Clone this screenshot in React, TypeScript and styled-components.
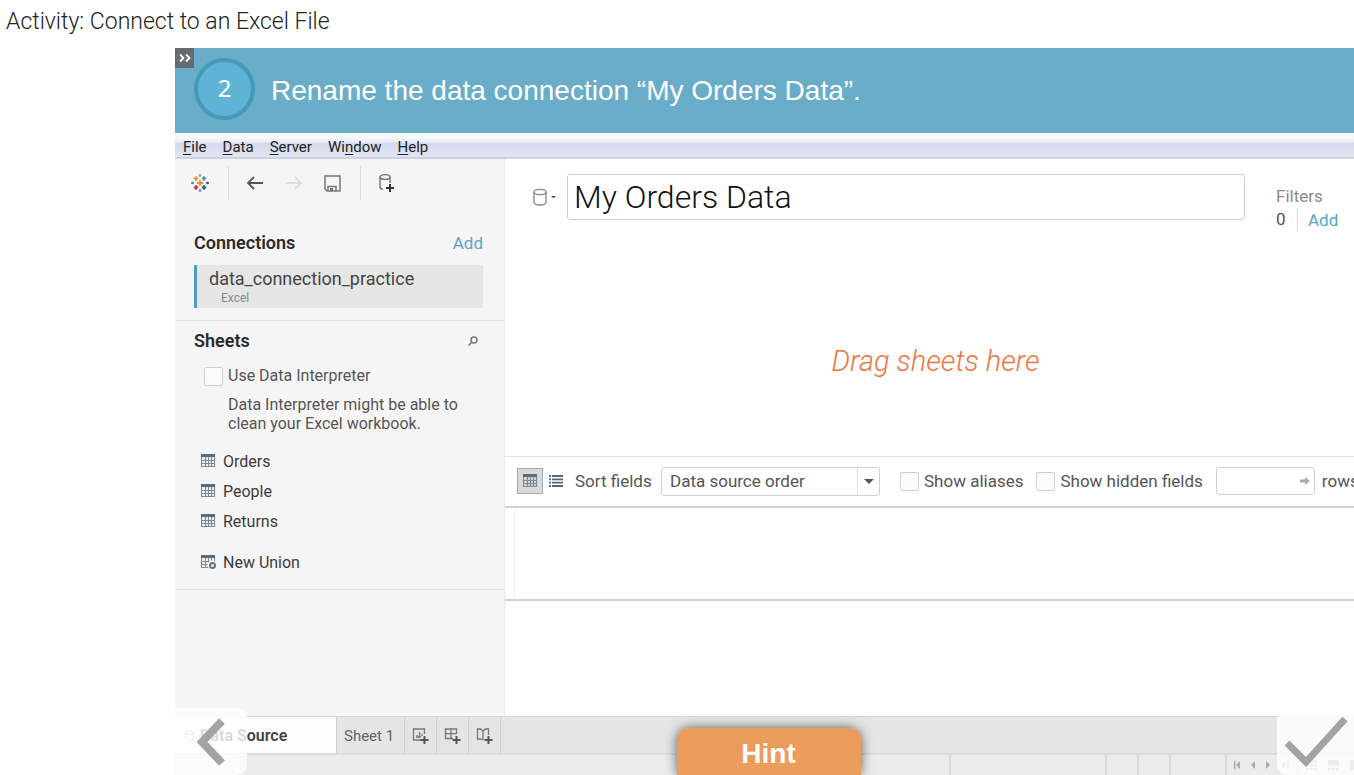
import React from "react";
import styled, { createGlobalStyle, css } from "styled-components";

const GlobalStyle = createGlobalStyle`
  *, *::before, *::after { box-sizing: border-box; }
  body {
    margin: 0;
    background: #fff;
    color: #333;
    font-family: Roboto, "Liberation Sans", sans-serif;
    overflow: hidden;
  }
  button, input, select { font: inherit; color: inherit; }
  button { border: 0; padding: 0; background: none; cursor: pointer; }
  h1, h2, p, ul { margin: 0; padding: 0; }
  ul { list-style: none; }
  svg { display: block; flex: none; }
`;

const Page = styled.div`
  display: flex;
  flex-direction: column;
  height: 100vh;
`;

const PageTitle = styled.h1`
  flex: none;
  padding: 7px 6px;
  height: 48px;
  font-size: 23px;
  line-height: 30px;
  font-weight: 300;
  color: #222;
`;

const Player = styled.main`
  position: relative;
  display: flex;
  flex-direction: column;
  flex: 1;
  min-height: 0;
  margin-left: 175px;
  overflow: hidden;
`;

const Banner = styled.header`
  display: flex;
  align-items: center;
  gap: 16px;
  flex: none;
  height: 85px;
  padding: 0 19px;
  background: #69adc8;
  color: #fff;
`;

const StepNumber = styled.span`
  display: flex;
  align-items: center;
  justify-content: center;
  flex: none;
  width: 61px;
  height: 62px;
  margin-bottom: 3px;
  padding-bottom: 4px;
  border: 4px solid #459aba;
  border-radius: 50%;
  background: #5fb4d6;
  font-family: "Noto Sans", sans-serif;
  font-size: 24px;
`;

const StepText = styled.p`
  font-family: "Liberation Sans", Arial, sans-serif;
  font-size: 28px;
  line-height: 32px;
  white-space: nowrap;
`;

const ExpandButton = styled.button`
  position: absolute;
  top: 0;
  left: 0;
  display: flex;
  align-items: center;
  justify-content: center;
  width: 19px;
  height: 20px;
  background: #636c70;
`;

const MenuBar = styled.nav`
  display: flex;
  gap: 16px;
  flex: none;
  height: 26px;
  padding: 0 8px;
  border-bottom: 2px solid #ced1e3;
  background: linear-gradient(#fff 0, #e9eef7 9px, #d4daec 10px, #e0e6f5 24px);
`;

const MenuItem = styled.button`
  font-size: 15px;
  line-height: 28px;
  height: 28px;
  color: #222;
  text-underline-offset: 2px;
`;

const Workspace = styled.div`
  display: flex;
  flex: 1;
  min-height: 0;
`;

const Sidebar = styled.aside`
  flex: none;
  width: 330px;
  border-right: 1px solid #e8e8e8;
  background: #f5f5f5;
`;

const Toolbar = styled.div`
  display: flex;
  align-items: center;
  height: 48px;
  padding: 0 16px;
`;

const ToolGroup = styled.div<{ $divided?: boolean }>`
  display: flex;
  align-items: center;
  gap: 21px;
  height: 34px;
  ${(p) =>
    p.$divided &&
    css`
      margin-left: 19px;
      padding-left: 17px;
      border-left: 1px solid #dadada;
    `}
`;

const Section = styled.section<{ $top: number }>`
  padding: ${(p) => p.$top}px 21px 12px 19px;
  border-bottom: 1px solid #e0e0e0;
`;

const SectionHead = styled.div`
  display: flex;
  align-items: center;
  justify-content: space-between;
  height: 24px;
`;

const SectionTitle = styled.h2`
  font-size: 18px;
  line-height: 24px;
  font-weight: 600;
  color: #2b2b2b;
`;

const TextLink = styled.a`
  font-size: 17px;
  line-height: 24px;
  color: #55a6c6;
  text-decoration: none;
`;

const SearchButton = styled.button`
  margin-right: 5px;
`;

const Connection = styled.button`
  display: block;
  width: 100%;
  height: 43px;
  margin-top: 10px;
  padding-left: 12px;
  border-left: 3px solid #4d9fc2;
  background: #e6e6e6;
  text-align: left;
`;

const ConnectionName = styled.span`
  display: block;
  font-size: 18px;
  line-height: 20px;
  margin-bottom: 2px;
  color: #444;
`;

const ConnectionKind = styled.span`
  display: block;
  padding-left: 12px;
  font-size: 12px;
  line-height: 14px;
  color: #888;
`;

const CheckLabel = styled.label<{ $large?: boolean }>`
  display: flex;
  align-items: center;
  gap: 5px;
  flex: none;
  font-size: ${(p) => (p.$large ? 17 : 16)}px;
  line-height: 22px;
  color: #555;
  white-space: nowrap;
`;

const CheckBox = styled.input.attrs({ type: "checkbox" })`
  appearance: none;
  width: 19px;
  height: 19px;
  margin: 0;
  border: 1px solid #cfcfcf;
  border-radius: 2px;
  background: #fbfbfb;
  &:checked { background: #4d9fc2; }
`;

const Interpreter = styled.div`
  padding: 12px 0 13px 10px;
`;

const Note = styled.p`
  margin-top: 8px;
  padding-left: 24px;
  font-size: 16px;
  line-height: 19px;
  color: #555;
`;

const SheetList = styled.ul`
  padding-left: 7px;
`;

const SheetButton = styled.button`
  display: flex;
  align-items: center;
  gap: 7px;
  height: 30px;
  font-size: 16px;
  color: #3c3c3c;
`;

const UnionRow = styled.li`
  margin-top: 11px;
`;

const Canvas = styled.div`
  display: flex;
  flex-direction: column;
  flex: 1;
  min-width: 0;
`;

const SourceHead = styled.div`
  display: flex;
  align-items: center;
  flex: none;
  height: 76px;
  padding-left: 28px;
`;

const SourceMenu = styled.button`
  display: flex;
  align-items: center;
  gap: 4px;
  margin-right: 11px;
`;

const SourceName = styled.input`
  flex: 1;
  min-width: 0;
  height: 46px;
  padding: 0 6px;
  border: 1px solid #cfcfcf;
  border-radius: 3px;
  background: #fff;
  font-size: 32px;
  font-weight: 300;
  color: #111;
`;

const Filters = styled.div`
  flex: none;
  width: 109px;
  padding-top: 22px;
  padding-left: 31px;
  font-size: 17px;
  line-height: 23px;
  color: #8a8a8a;
`;

const FilterRow = styled.div`
  display: flex;
  align-items: center;
  color: #555;
`;

const FilterCount = styled.span`
  width: 22px;
  margin-right: 10px;
  border-right: 1px solid #d8d8d8;
`;

const DropArea = styled.div`
  display: flex;
  align-items: center;
  justify-content: center;
  flex: 190;
  padding-top: 32px;
  padding-left: 12px;
  font-size: 29px;
  font-style: italic;
  font-weight: 300;
  color: #ee7440;
`;

const FieldBar = styled.div`
  display: flex;
  align-items: center;
  flex: none;
  height: 52px;
  padding-left: 12px;
  border-top: 1px solid #e4e4e4;
  border-bottom: 2px solid #cfd2d2;
  font-size: 17px;
  color: #555;
  white-space: nowrap;
  overflow: hidden;
`;

const ViewButton = styled.button<{ $active?: boolean }>`
  display: flex;
  align-items: center;
  justify-content: center;
  flex: none;
  width: 26px;
  height: 26px;
  border: 1px solid ${(p) => (p.$active ? "#a8a8a8" : "transparent")};
  background: ${(p) => (p.$active ? "#d9d9d9" : "transparent")};
`;

const SortLabel = styled.label`
  flex: none;
  width: 86px;
  margin-left: 6px;
`;

const SelectBox = styled.div`
  position: relative;
  flex: none;
  width: 219px;
  margin-right: 20px;
`;

const Select = styled.select`
  appearance: none;
  display: block;
  width: 100%;
  height: 29px;
  padding: 0 30px 0 8px;
  border: 1px solid #cfd2d2;
  border-radius: 3px;
  background: #fff;
`;

const SelectArrow = styled.span`
  position: absolute;
  top: 1px;
  right: 1px;
  display: flex;
  align-items: center;
  justify-content: center;
  width: 22px;
  height: 27px;
  border-left: 1px solid #e0e0e0;
  pointer-events: none;
`;

const CheckGroup = styled.div`
  display: flex;
  gap: 13px;
  flex: none;
`;

const RowsLabel = styled.label`
  display: flex;
  align-items: center;
  gap: 7px;
  flex: none;
  margin-left: 13px;
`;

const RowsField = styled.span`
  position: relative;
  display: block;
  width: 99px;
`;

const RowsInput = styled.input`
  display: block;
  width: 100%;
  height: 28px;
  padding: 0 20px 0 6px;
  border: 1px solid #cfcfcf;
  border-radius: 3px;
`;

const RowsArrow = styled.span`
  position: absolute;
  top: 10px;
  right: 5px;
`;

const FieldGrid = styled.div`
  flex: none;
  height: 93px;
  padding-left: 9px;
  border-bottom: 2px solid #cfd2d2;
`;

const FieldGridBody = styled.div`
  height: 100%;
  border-left: 1px solid #efefef;
`;

const DataPreview = styled.div`
  flex: 116;
`;

const Tabs = styled.nav`
  display: flex;
  flex: none;
  height: 37px;
  border-top: 1px solid #d4d4d4;
  background: #e5e5e5;
`;

const Tab = styled.button<{ $active?: boolean; $wide?: boolean }>`
  display: flex;
  align-items: center;
  justify-content: center;
  gap: 6px;
  flex: none;
  height: 37px;
  padding: 0 ${(p) => (p.$wide ? 10 : 7)}px 0 7px;
  border-right: 1px solid #cfcfcf;
  font-size: 15px;
  color: #666;
  ${(p) =>
    p.$active &&
    css`
      justify-content: flex-start;
      width: 162px;
      padding: 0 10px;
      background: #fdfdfd;
      font-size: 16px;
      font-weight: 600;
      color: #444;
    `}
`;

const StatusBar = styled.footer`
  display: flex;
  justify-content: flex-end;
  flex: none;
  height: 22px;
  border-top: 2px solid #dadada;
  background: #ebebeb;
`;

const StatusCell = styled.div<{ $width: number }>`
  display: flex;
  align-items: center;
  gap: 6px;
  flex: none;
  width: ${(p) => p.$width}px;
  padding-left: 7px;
  border-left: 2px solid #d9d9d9;
`;

const NavButton = styled.button<{ $side: "left" | "right" }>`
  position: absolute;
  bottom: 0;
  ${(p) => p.$side}: 0;
  display: flex;
  align-items: center;
  justify-content: center;
  width: ${(p) => (p.$side === "left" ? 72 : 77)}px;
  height: 67px;
  border-radius: ${(p) => (p.$side === "left" ? "0 10px 10px 0" : "10px 0 0 10px")};
  background: rgba(255, 255, 255, 0.8);
`;

const HintButton = styled.button`
  position: absolute;
  bottom: 0;
  left: calc(50% - 88px);
  width: 184px;
  height: 47px;
  padding-top: 5px;
  border-radius: 12px 12px 0 0;
  background: rgba(235, 153, 84, 0.96);
  box-shadow: 0 0 12px rgba(0, 0, 0, 0.6);
  font-family: "Liberation Sans", Arial, sans-serif;
  font-size: 28px;
  font-weight: 700;
  color: #fff;
`;

const LOGO_MARKS: [number, number, number, string][] = [
  [9, 9, 3, "#eb8a3c"],
  [5, 4.5, 2.2, "#e9963f"],
  [13, 4.5, 2.2, "#5f8fa8"],
  [5, 13.5, 2.2, "#c4314f"],
  [13, 13.5, 2.2, "#35598f"],
  [9, 1.5, 1.3, "#7aa5bd"],
  [9, 16.5, 1.3, "#7e86a8"],
  [1.5, 9, 1.3, "#6c7fae"],
  [16.5, 9, 1.3, "#35598f"],
];

const Logo = () => (
  <svg width="18" height="18" viewBox="0 0 18 18" fill="none" strokeWidth="1.8">
    {LOGO_MARKS.map(([x, y, r, color]) => (
      <path key={`${x}-${y}`} stroke={color} d={`M${x - r} ${y}h${r * 2}M${x} ${y - r}v${r * 2}`} />
    ))}
  </svg>
);

const Arrow = ({ forward }: { forward?: boolean }) => (
  <svg width="18" height="16" viewBox="0 0 18 16" fill="none" stroke={forward ? "#d6d6d6" : "#555"} strokeWidth={forward ? 1.4 : 1.8}>
    <path d={forward ? "M1 8h15M10 2l6 6-6 6" : "M17 8H2M8 2L2 8l6 6"} />
  </svg>
);

const Save = () => (
  <svg width="17" height="17" viewBox="0 0 17 17" fill="none" stroke="#777" strokeWidth="1.5">
    <path d="M1 1h15v15H3l-2-2z" />
    <path d="M4 16v-4.500h8V16" />
    <path d="M6 13v3h3v-3z" fill="#777" stroke="none" />
  </svg>
);

const NewSource = () => (
  <svg width="17" height="20" viewBox="0 0 17 20" fill="none" stroke="#777" strokeWidth="1.4">
    <ellipse cx="7" cy="4" rx="5" ry="2.4" />
    <path d="M2 4v10q0 2 3 2.400M12 4v6" />
    <path d="M12 11v8M8 15h8" stroke="#333" strokeWidth="2" />
  </svg>
);

const Cylinder = ({ color = "#888", width = 14, height = 18 }) => (
  <svg width={width} height={height} viewBox="0 0 14 18" fill="none" stroke={color} strokeWidth="1.3">
    <ellipse cx="7" cy="4" rx="6" ry="2.700" />
    <path d="M1 4v10c0 4 12 4 12 0V4" />
  </svg>
);

const Caret = ({ size }: { size: number }) => (
  <svg width={size} height={size / 2} viewBox="0 0 10 5" fill="#555">
    <path d="M0 0h10L5 5z" />
  </svg>
);

const Search = () => (
  <svg width="10" height="10" viewBox="0 0 10 10" fill="none" stroke="#777" strokeWidth="1.5">
    <circle cx="6" cy="3.900" r="3" />
    <path d="M4 6L.5 9.500" />
  </svg>
);

const TableIcon = ({ union }: { union?: boolean }) => (
  <svg width="15" height="14" viewBox="0 0 15 14" fill="none">
    <path d="M.5 2v10.500h13V2M4.500 3v10M7.500 3v10M10.500 3v10M0 6.500h14M0 9.500h14" stroke="#7c8a97" strokeWidth="1.200" />
    <path d="M0 0h14v3H0z" fill="#5c6c7c" />
    {union && (
      <>
        <circle cx="11" cy="10" r="4.500" fill="#f5f5f5" />
        <circle cx="11.500" cy="10.500" r="2.500" stroke="#657484" strokeWidth="2" />
      </>
    )}
  </svg>
);

const ListIcon = () => (
  <svg width="14" height="12" viewBox="0 0 14 12" fill="none" stroke="#56657c" strokeWidth="1.800">
    <path d="M0 1h2M3 1h11M0 4.300h2M3 4.300h11M0 7.600h2M3 7.600h11M0 11h2M3 11h11" />
  </svg>
);

const AddTabIcon = ({ kind }: { kind: "sheet" | "dashboard" | "story" }) => (
  <svg width="17" height="17" viewBox="0 0 17 17" fill="none" stroke="#777" strokeWidth="1.300">
    {kind === "sheet" && <path d="M12.500 7V2H1.500v11H9M5 9.500V8M7.500 9.500V5M10 9V6.500M4 10h5" />}
    {kind === "dashboard" && <path d="M12.500 7V2H1.500v9.500H9M1.500 6.700h11M7 2v9.500" />}
    {kind === "story" && <path d="M12.500 8V2H9.500L7 4 4.500 2H1.500v10h3L7 13M7 4v9M4.500 2v1M9.500 2v1" />}
    <path d="M12.500 9v8M8.500 13h8" stroke="#555" strokeWidth="2" />
  </svg>
);

const Step = ({ d }: { d: string }) => (
  <svg width="10" height="8" viewBox="0 0 10 8" fill="#aaa">
    <path d={d} />
  </svg>
);

const SHEETS = ["Orders", "People", "Returns"];

const MENUS: [string, string, string][] = [
  ["", "F", "ile"],
  ["", "D", "ata"],
  ["", "S", "erver"],
  ["Wi", "n", "dow"],
  ["", "H", "elp"],
];

export default function App() {
  return (
    <Page>
      <GlobalStyle />
      <PageTitle>Activity: Connect to an Excel File</PageTitle>
      <Player>
        <Banner>
          <StepNumber>2</StepNumber>
          <StepText>Rename the data connection “My Orders Data”.</StepText>
        </Banner>
        <ExpandButton aria-label="Expand">
          <svg width="12" height="10" viewBox="0 0 12 10" fill="none" stroke="#fff" strokeWidth="1.800">
            <path d="M1 1.500L4.500 5 1 8.500M7 1.500L10.500 5 7 8.500" />
          </svg>
        </ExpandButton>

        <MenuBar>
          {MENUS.map(([before, key, after]) => (
            <MenuItem key={key}>
              {before}
              <u>{key}</u>
              {after}
            </MenuItem>
          ))}
        </MenuBar>

        <Workspace>
          <Sidebar>
            <Toolbar>
              <ToolGroup>
                <button aria-label="Start page"><Logo /></button>
              </ToolGroup>
              <ToolGroup $divided>
                <button aria-label="Back"><Arrow /></button>
                <button aria-label="Forward"><Arrow forward /></button>
                <button aria-label="Save"><Save /></button>
              </ToolGroup>
              <ToolGroup $divided>
                <button aria-label="New data source"><NewSource /></button>
              </ToolGroup>
            </Toolbar>

            <Section $top={24}>
              <SectionHead>
                <SectionTitle>Connections</SectionTitle>
                <TextLink href="#add-connection">Add</TextLink>
              </SectionHead>
              <Connection>
                <ConnectionName>data_connection_practice</ConnectionName>
                <ConnectionKind>Excel</ConnectionKind>
              </Connection>
            </Section>

            <Section $top={8}>
              <SectionHead>
                <SectionTitle>Sheets</SectionTitle>
                <SearchButton aria-label="Search sheets"><Search /></SearchButton>
              </SectionHead>
              <Interpreter>
                <CheckLabel>
                  <CheckBox />
                  Use Data Interpreter
                </CheckLabel>
                <Note>Data Interpreter might be able to clean your Excel workbook.</Note>
              </Interpreter>
              <SheetList>
                {SHEETS.map((name) => (
                  <li key={name}>
                    <SheetButton><TableIcon />{name}</SheetButton>
                  </li>
                ))}
                <UnionRow>
                  <SheetButton><TableIcon union />New Union</SheetButton>
                </UnionRow>
              </SheetList>
            </Section>
          </Sidebar>

          <Canvas>
            <SourceHead>
              <SourceMenu aria-label="Data source options">
                <Cylinder />
                <Caret size={5} />
              </SourceMenu>
              <SourceName aria-label="Data source name" defaultValue="My Orders Data" />
              <Filters>
                Filters
                <FilterRow>
                  <FilterCount>0</FilterCount>
                  <TextLink href="#add-filter">Add</TextLink>
                </FilterRow>
              </Filters>
            </SourceHead>
            <DropArea>Drag sheets here</DropArea>
            <FieldBar>
              <ViewButton $active aria-label="Preview data source"><TableIcon /></ViewButton>
              <ViewButton aria-label="Manage metadata"><ListIcon /></ViewButton>
              <SortLabel htmlFor="sort-fields">Sort fields</SortLabel>
              <SelectBox>
                <Select id="sort-fields">
                  <option>Data source order</option>
                </Select>
                <SelectArrow><Caret size={10} /></SelectArrow>
              </SelectBox>
              <CheckGroup>
                <CheckLabel $large><CheckBox />Show aliases</CheckLabel>
                <CheckLabel $large><CheckBox />Show hidden fields</CheckLabel>
              </CheckGroup>
              <RowsLabel>
                <RowsField>
                  <RowsInput />
                  <RowsArrow>
                    <svg width="10" height="8" viewBox="0 0 10 8" fill="#aaa">
                      <path d="M0 2.500h5V0l5 4-5 4V5.500H0z" />
                    </svg>
                  </RowsArrow>
                </RowsField>
                rows
              </RowsLabel>
            </FieldBar>
            <FieldGrid>
              <FieldGridBody />
            </FieldGrid>
            <DataPreview />
          </Canvas>
        </Workspace>

        <Tabs>
          <Tab $active><Cylinder width={9} height={12} />Data Source</Tab>
          <Tab $wide>Sheet 1</Tab>
          <Tab aria-label="New worksheet"><AddTabIcon kind="sheet" /></Tab>
          <Tab aria-label="New dashboard"><AddTabIcon kind="dashboard" /></Tab>
          <Tab aria-label="New story"><AddTabIcon kind="story" /></Tab>
        </Tabs>
        <StatusBar>
          <StatusCell $width={156} />
          <StatusCell $width={32} />
          <StatusCell $width={32} />
          <StatusCell $width={56} />
          <StatusCell $width={72}>
            <Step d="M0 0h1.500v8H0zM2 4l4-4v8z" />
            <Step d="M1 4l4-4v8z" />
            <Step d="M0 0l4 4-4 4z" />
            <Step d="M0 0l4 4-4 4zM5 0h1.500v8H5z" />
          </StatusCell>
          <StatusCell $width={57}>
            <svg width="52" height="12" viewBox="0 0 52 12" fill="#aaa">
              <path d="M0 1h3v3H0zM4 1h3v3H4zM8 1h3v3H8zM0 5h3v3H0zM4 5h3v3H4zM8 5h3v3H8zM0 9h3v2H0zM4 9h3v2H4zM8 9h3v2H8z" />
              <path d="M22 1h11v6H22zM22 9h3v2h-3zM26 9h3v2h-3zM30 9h3v2h-3zM44 1h8v10h-8z" />
            </svg>
          </StatusCell>
        </StatusBar>

        <NavButton $side="left" aria-label="Previous step">
          <svg width="28" height="48" viewBox="0 0 28 48" fill="none" stroke="#a3a3a3" strokeWidth="8">
            <path d="M25 3L5 24l20 21" />
          </svg>
        </NavButton>
        <HintButton>Hint</HintButton>
        <NavButton $side="right" aria-label="Check answer">
          <svg width="64" height="52" viewBox="0 0 64 52" fill="none" stroke="#a3a3a3" strokeWidth="7">
            <path d="M3 27l19 19L61 3" />
          </svg>
        </NavButton>
      </Player>
    </Page>
  );
}
